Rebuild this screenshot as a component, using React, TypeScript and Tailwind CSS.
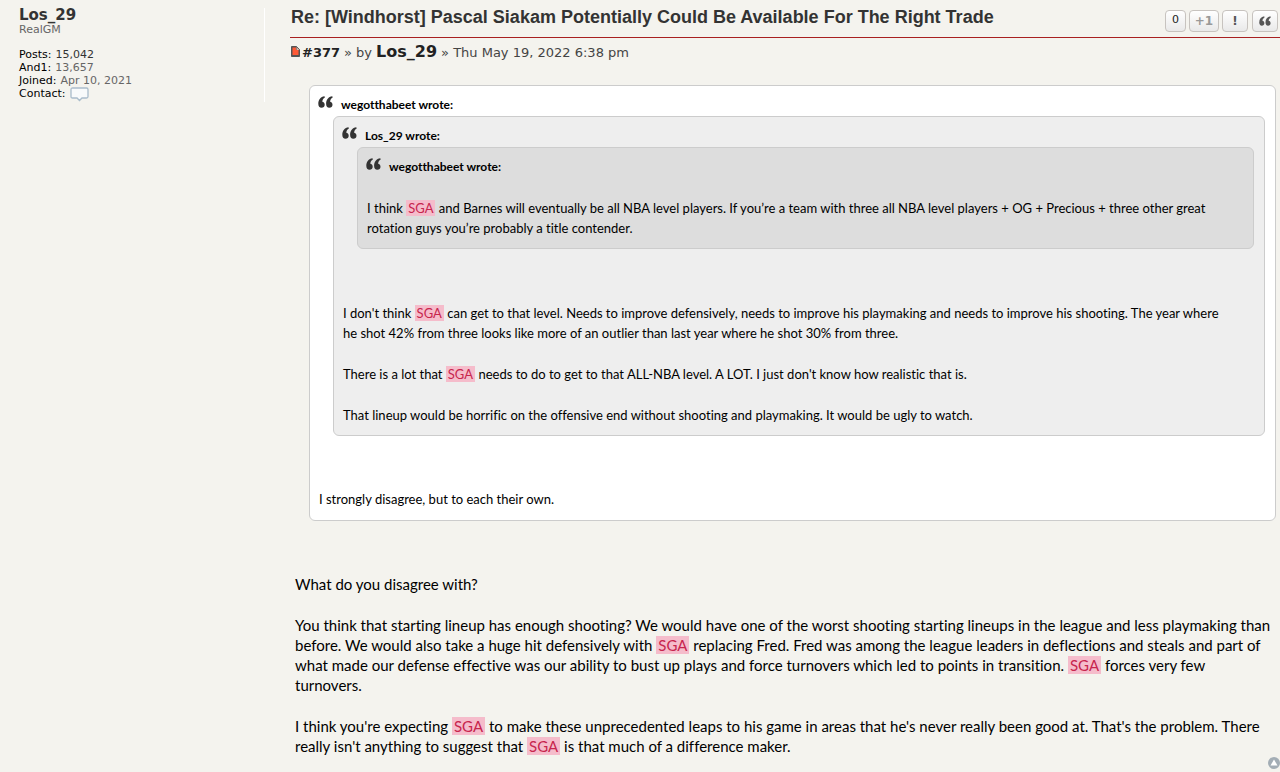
import type { ReactNode } from "react";
import clsx from "clsx";

const postFont = "font-[Lato,'Open_Sans',sans-serif] [font-variant-ligatures:none]";
const uiFont = "font-['DejaVu_Sans',Verdana,sans-serif]";

function QuoteMark({ className }: { className?: string }) {
  return (
    <svg viewBox="0 0 15 12" className={className} aria-hidden="true">
      <path
        fill="currentColor"
        d="M6.500.2C2.600.8.3 3.600.3 7.800c0 2.500 1.200 4 3.200 4 1.900 0 3.200-1.300 3.200-3.100 0-1.600-1-2.700-2.400-2.900.1-1.800.9-3.200 2.600-4.200z"
      />
      <path
        fill="currentColor"
        d="M14.300.2c-3.900.6-6.200 3.400-6.200 7.600 0 2.500 1.200 4 3.200 4 1.900 0 3.200-1.300 3.200-3.100 0-1.600-1-2.700-2.400-2.900.1-1.800.9-3.200 2.600-4.200z"
      />
    </svg>
  );
}

function Sga() {
  return <mark className="bg-[#f5bccb] text-[#c7254e] px-0.5">SGA</mark>;
}

function Quote({
  author,
  className,
  children,
}: {
  author: string;
  className?: string;
  children: ReactNode;
}) {
  return (
    <blockquote
      className={clsx("border border-[#ccc] rounded-md pt-[9px] pb-2.5", className)}
    >
      <cite className="flex gap-2 pl-2 h-5 text-xs leading-5 font-bold not-italic">
        <QuoteMark className="w-[15px] h-3 mt-px text-[#333]" />
        {author} wrote:
      </cite>
      {children}
    </blockquote>
  );
}

function Stat({ label, children }: { label: string; children: ReactNode }) {
  return (
    <div className="flex gap-1">
      <dt className="text-black">{label}:</dt>
      <dd>{children}</dd>
    </div>
  );
}

function Profile() {
  return (
    <aside
      className={clsx(
        uiFont,
        "w-[246px] shrink-0 mt-2 self-start border-r border-white text-[11px] leading-[13px] text-[#666]"
      )}
    >
      <a href="#profile" className="block text-[15px] leading-[15px] font-bold text-[#333]">
        Los_29
      </a>
      <div>RealGM</div>
      <dl className="mt-3">
        <Stat label="Posts">
          <span className="text-[#333]">15,042</span>
        </Stat>
        <Stat label="And1">13,657</Stat>
        <Stat label="Joined">Apr 10, 2021</Stat>
        <Stat label="Contact">
          <a href="#contact" aria-label="Send private message">
            <svg viewBox="0 0 19 15" className="w-[19px] h-[15px]">
              <path
                d="M2.500 1h14q1.500 0 1.500 1.500v7q0 1.500-1.500 1.500h-4.500l-2.500 2.500L7 11H2.500Q1 11 1 9.500v-7Q1 1 2.500 1z"
                fill="#f8fafb"
                stroke="#a9bccb"
                strokeWidth="1.300"
              />
            </svg>
          </a>
        </Stat>
      </dl>
    </aside>
  );
}

function PostButton({
  label,
  className,
  children,
}: {
  label: string;
  className?: string;
  children: ReactNode;
}) {
  return (
    <button
      type="button"
      aria-label={label}
      className={clsx(
        "h-[22px] flex items-center justify-center border border-[#c7c3bf] rounded bg-linear-to-b from-white to-[#e9e9e9]",
        className
      )}
    >
      {children}
    </button>
  );
}

function PostHeader() {
  return (
    <header>
      <div className="h-[38px] flex justify-between border-b border-[#a82020]">
        <h3 className="pl-px pt-[7px] text-lg leading-5 font-bold text-[#333] font-['Liberation_Sans',Arial,sans-serif]">
          Re: [Windhorst] Pascal Siakam Potentially Could Be Available For The Right Trade
        </h3>
        <div className={clsx(uiFont, "flex gap-[3px] pt-2.5 pr-0.5 font-bold")}>
          <span className="w-[21px] h-[22px] border border-[#c7c3bf] rounded bg-linear-to-b from-white to-[#e9e9e9] text-center text-[11px] leading-[18px] font-normal text-[#222]">
            0
          </span>
          <PostButton label="And1" className="w-[30px] text-xs text-[#999]">
            +1
          </PostButton>
          <PostButton label="Report" className="w-[26px] text-xs text-[#555]">
            !
          </PostButton>
          <PostButton label="Quote" className="w-[26px] ml-px text-[#555]">
            <QuoteMark className="w-3 h-2.5" />
          </PostButton>
        </div>
      </div>
      <p
        className={clsx(
          uiFont,
          "mt-1 h-[21px] flex items-baseline gap-1 pl-px text-[13px] leading-5 text-[#444]"
        )}
      >
        <a href="#377" className="flex items-baseline font-bold text-[#222]">
          <svg viewBox="0 0 9 11" className="w-[9px] h-[11px] mr-0.5">
            <path d="M.5.5h5l3 3v7h-8z" fill="#555" stroke="#555" />
            <path d="M1.500 1.500H5V4h2.500v5h-6z" fill="#ff5a36" />
            <path d="M5.500 1v3h3z" fill="#d8b8ac" />
          </svg>
          #377
        </a>
        <span>» by</span>
        <a href="#profile" className="text-base leading-5 font-bold text-[#222]">
          Los_29
        </a>
        <span>» Thu May 19, 2022 6:38 pm</span>
      </p>
    </header>
  );
}

export default function App() {
  return (
    <div className="flex min-h-screen overflow-hidden bg-[#f4f3ee] pl-[19px] text-black">
      <Profile />
      <article className="flex-1 min-w-0 ml-[25px]">
        <PostHeader />

        <Quote
          author="wegotthabeet"
          className={clsx(postFont, "mt-[22px] ml-[19px] mr-1 bg-white text-[13px] leading-5")}
        >
          <Quote author="Los_29" className="mt-px ml-[23px] mr-2.5 bg-[#eee]">
            <Quote author="wegotthabeet" className="mt-px ml-[23px] mr-2.5 bg-[#ddd]">
              <p className="mt-[21px] pl-[9px]">
                I think <Sga /> and Barnes will eventually be all NBA level players. If you’re a
                team with three all NBA level players + OG + Precious + three other great
                <br />
                rotation guys you’re probably a title contender.
              </p>
            </Quote>
            <div className="mt-[54px] pl-[9px] flex flex-col gap-[21px]">
              <p>
                I don't think <Sga /> can get to that level. Needs to improve defensively, needs to
                improve his playmaking and needs to improve his shooting. The year where
                <br />
                he shot 42% from three looks like more of an outlier than last year where he shot
                30% from three.
              </p>
              <p>
                There is a lot that <Sga /> needs to do to get to that ALL-NBA level. A LOT. I just
                don't know how realistic that is.
              </p>
              <p>
                That lineup would be horrific on the offensive end without shooting and playmaking.
                It would be ugly to watch.
              </p>
            </div>
          </Quote>
          <p className="mt-[53px] mb-px pl-[9px]">I strongly disagree, but to each their own.</p>
        </Quote>

        <div
          className={clsx(
            postFont,
            "mt-[53px] pl-[5px] flex flex-col gap-[21px] text-[15px] leading-5"
          )}
        >
          <p>What do you disagree with?</p>
          <p>
            You think that starting lineup has enough shooting? We would have one of the worst
            shooting starting lineups in the league and less playmaking than
            <br />
            before. We would also take a huge hit defensively with <Sga /> replacing Fred. Fred was
            among the league leaders in deflections and steals and part of
            <br />
            what made our defense effective was our ability to bust up plays and force turnovers
            which led to points in transition. <Sga /> forces very few
            <br />
            turnovers.
          </p>
          <p>
            I think you're expecting <Sga /> to make these unprecedented leaps to his game in areas
            that he's never really been good at. That's the problem. There
            <br />
            really isn't anything to suggest that <Sga /> is that much of a difference maker.
          </p>
        </div>

        <a href="#top" aria-label="Top" className="block w-3 mt-px ml-auto">
          <svg viewBox="0 0 12 12" className="size-3">
            <circle cx="6" cy="6" r="6" fill="#a3adb5" />
            <path d="M6 2.500 9.500 8.500h-7z" fill="#fff" />
          </svg>
        </a>
      </article>
    </div>
  );
}
